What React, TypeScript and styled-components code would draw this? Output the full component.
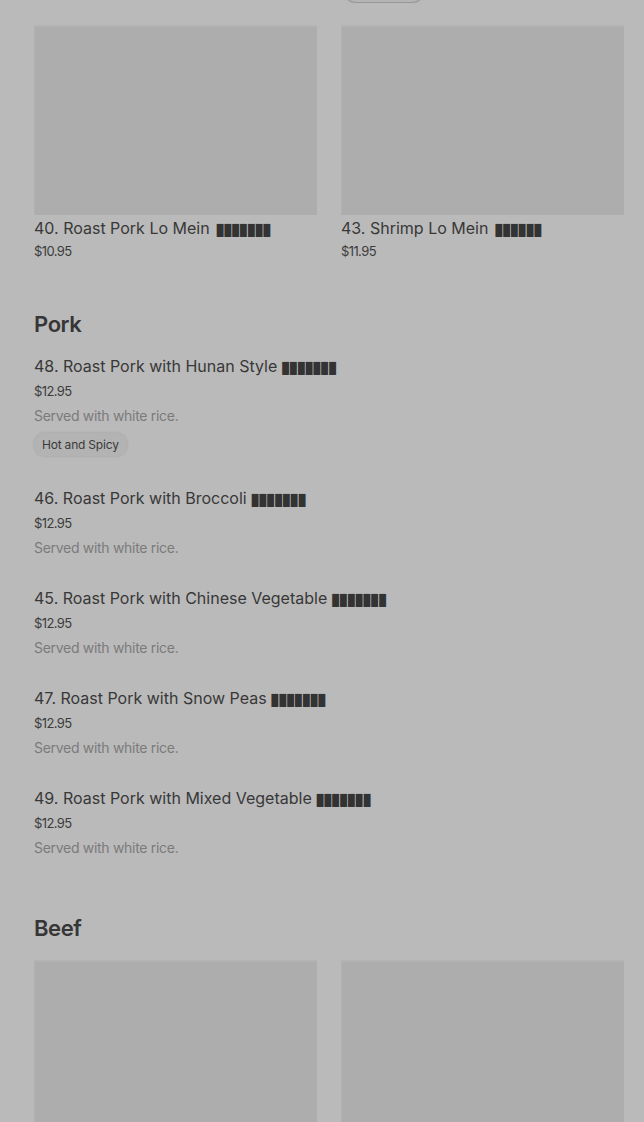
import React from 'react'
import styled, { createGlobalStyle } from 'styled-components'

interface Dish {
  name: string
  glyphs: number
  price: string
  note?: string
  tag?: string
  wide?: boolean
}

const topCards: Dish[] = [
  { name: '40. Roast Pork Lo Mein', glyphs: 7, price: '$10.95', wide: true },
  { name: '43. Shrimp Lo Mein', glyphs: 6, price: '$11.95', wide: true },
]

const porkDishes: Dish[] = [
  { name: '48. Roast Pork with Hunan Style', glyphs: 7, price: '$12.95', note: 'Served with white rice.', tag: 'Hot and Spicy' },
  { name: '46. Roast Pork with Broccoli', glyphs: 7, price: '$12.95', note: 'Served with white rice.' },
  { name: '45. Roast Pork with Chinese Vegetable', glyphs: 7, price: '$12.95', note: 'Served with white rice.' },
  { name: '47. Roast Pork with Snow Peas', glyphs: 7, price: '$12.95', note: 'Served with white rice.' },
  { name: '49. Roast Pork with Mixed Vegetable', glyphs: 7, price: '$12.95', note: 'Served with white rice.' },
]

const Name: React.FC<{ dish: Dish }> = ({ dish }) => (
  <DishName>
    {dish.name}
    <Glyphs $wide={dish.wide}>{'█'.repeat(dish.glyphs)}</Glyphs>
  </DishName>
)

const App: React.FC = () => {
  return (
    <>
      <GlobalStyle />
      <Page>
        <TopStrip>
          <CutPill />
        </TopStrip>

        <CardGrid>
          {topCards.map((dish) => (
            <Card key={dish.name}>
              <Thumb />
              <Name dish={dish} />
              <Price $space={3}>{dish.price}</Price>
            </Card>
          ))}
        </CardGrid>

        <Section $gap={49}>
          <SectionTitle>Pork</SectionTitle>
          <List>
            {porkDishes.map((dish) => (
              <Item key={dish.name}>
                <Name dish={dish} />
                <Price $space={5}>{dish.price}</Price>
                {dish.note && <Note>{dish.note}</Note>}
                {dish.tag && <Tag>{dish.tag}</Tag>}
              </Item>
            ))}
          </List>
        </Section>

        <Section $gap={56}>
          <SectionTitle>Beef</SectionTitle>
          <CardGrid $top={18}>
            <Card>
              <Thumb />
            </Card>
            <Card>
              <Thumb />
            </Card>
          </CardGrid>
        </Section>
      </Page>
    </>
  )
}

const GlobalStyle = createGlobalStyle`
  html, body {
    margin: 0;
    padding: 0;
    background: #bababa;
  }
  body {
    font-family: Inter, Roboto, "Liberation Sans", sans-serif;
    color: #3a3a3a;
    overflow: hidden;
  }
`

const Page = styled.div`
  width: 644px;
  height: 1122px;
  overflow: hidden;
  padding: 0 20px 0 34px;
  box-sizing: border-box;
  background: #bababa;
`

const TopStrip = styled.div`
  height: 3px;
  overflow: hidden;
  padding-left: 311px;
`

const CutPill = styled.div`
  width: 78px;
  height: 22px;
  margin-top: -20px;
  border-radius: 12px;
  background: #b4b4b4;
  box-shadow: 0 1px 2px rgba(0, 0, 0, 0.25);
`

const CardGrid = styled.div<{ $top?: number }>`
  display: grid;
  grid-template-columns: repeat(2, 1fr);
  column-gap: 24px;
  padding-top: ${(p) => p.$top ?? 22}px;
`

const Card = styled.div`
  display: flex;
  flex-direction: column;
`

const Thumb = styled.div`
  height: 188px;
  background: #adadad;
  border-top: 2px solid #b3b3b3;
  border-left: 1px solid #b1b1b1;
`

const DishName = styled.div`
  font-size: 16px;
  line-height: 20px;
  height: 20px;
  font-weight: 400;
  color: #383838;
  white-space: nowrap;
  ${Card} & {
    margin-top: 3px;
  }
`

const Glyphs = styled.span<{ $wide?: boolean }>`
  font-family: "DejaVu Sans Mono", monospace;
  font-size: 11px;
  line-height: 0;
  letter-spacing: 1.2px;
  margin-left: ${(p) => (p.$wide ? 7 : 5)}px;
  color: #333333;
`

const Price = styled.div<{ $space: number }>`
  font-size: 13px;
  line-height: 20px;
  margin-top: ${(p) => p.$space}px;
  color: #3c3c3c;
  letter-spacing: -0.6px;
`

const Note = styled.div`
  font-size: 14px;
  line-height: 20px;
  margin-top: 5px;
  color: #7b7b7b;
  letter-spacing: -0.3px;
`

const Tag = styled.div`
  align-self: flex-start;
  margin: 7px 0 2px;
  padding: 0 8px;
  height: 23px;
  line-height: 23px;
  font-size: 12px;
  color: #3a3a3a;
  background: #b3b3b3;
  border-radius: 12px;
  box-shadow: 0 0 3px rgba(0, 0, 0, 0.15);
  letter-spacing: -0.2px;
`

const Section = styled.section<{ $gap: number }>`
  padding-top: ${(p) => p.$gap}px;
`

const SectionTitle = styled.h2`
  margin: 0;
  font-size: 22px;
  line-height: 28px;
  font-weight: 600;
  color: #363636;
  letter-spacing: -0.4px;
`

const List = styled.div`
  display: flex;
  flex-direction: column;
  gap: 30px;
  padding-top: 18px;
`

const Item = styled.div`
  display: flex;
  flex-direction: column;
`

export default App
